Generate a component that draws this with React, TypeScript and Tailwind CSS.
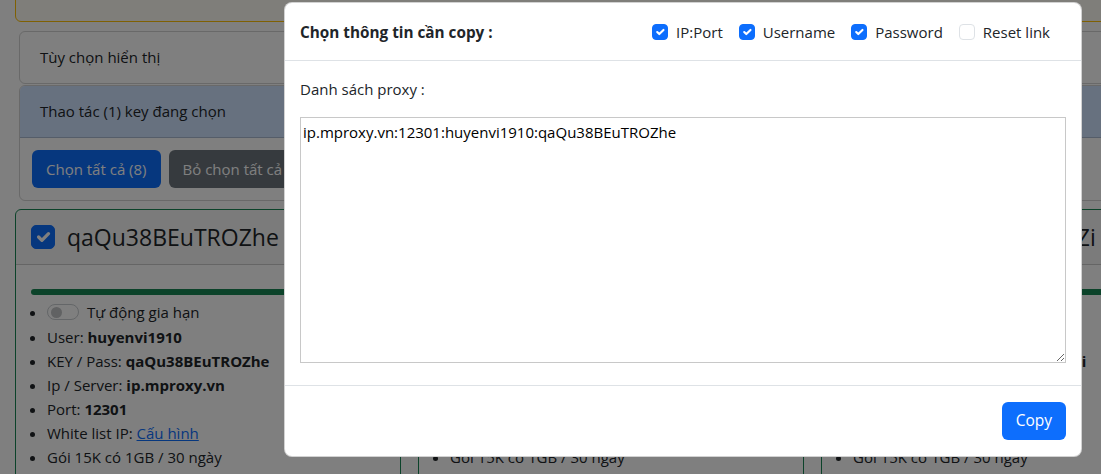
import React from "react";

function Check({ checked, size = 16 }: { checked: boolean; size?: number }) {
  const cls =
    size === 16
      ? "w-[16px] h-[16px] rounded-[4px]"
      : "w-[24px] h-[24px] rounded-[5px]";
  return (
    <span
      className={
        cls +
        " shrink-0 inline-flex items-center justify-center border " +
        (checked ? "bg-[#0d6efd] border-[#0d6efd]" : "bg-white border-[#dee2e6]")
      }
    >
      {checked && (
        <svg viewBox="0 0 20 20" className="w-full h-full">
          <path
            fill="none"
            stroke="#fff"
            strokeLinecap="round"
            strokeLinejoin="round"
            strokeWidth="3"
            d="m6 10 3 3 6-6"
          />
        </svg>
      )}
    </span>
  );
}

function KeyCard({ keyName, checked }: { keyName: string; checked: boolean }) {
  return (
    <div className="border border-[#198754] rounded-[6px] bg-white overflow-hidden">
      <div className="h-[55px] flex items-center gap-[12px] px-[15px] border-b border-black/[.175] bg-black/[.03]">
        <Check checked={checked} size={24} />
        <span className="text-[23px] leading-[30px] font-medium text-[#212529] whitespace-nowrap">
          {keyName}
        </span>
      </div>
      <div className="px-[15px] pt-[24px] pb-[16px]">
        <div className="h-[6px] rounded-full bg-[#198754]" />
        <ul className="list-disc pl-[16px] mt-[4px] text-[15px] leading-[24px] text-[#212529]">
          <li className="h-[26px] pt-[1px]">
            <span className="inline-flex items-center gap-[8px] align-top h-[24px]">
              <span className="w-[32px] h-[16px] rounded-full border border-[#c8ccd0] bg-white flex items-center pl-[3px]">
                <span className="w-[11px] h-[11px] rounded-full bg-[#c2c4c6]" />
              </span>
              <span>Tự động gia hạn</span>
            </span>
          </li>
          <li>
            User: <b>huyenvi1910</b>
          </li>
          <li>
            KEY / Pass: <b>{keyName}</b>
          </li>
          <li>
            Ip / Server: <b>ip.mproxy.vn</b>
          </li>
          <li>
            Port: <b>12301</b>
          </li>
          <li>
            White list IP: <span className="text-[#0d6efd] underline">Cấu hình</span>
          </li>
          <li>Gói 15K có 1GB / 30 ngày</li>
          <li>Hết hạn: 30 ngày</li>
        </ul>
      </div>
    </div>
  );
}

export default function App() {
  return (
    <div className="relative w-[1101px] h-[474px] overflow-hidden bg-white font-['Open_Sans',sans-serif] text-[#212529]">
      {/* background page */}
      <div className="absolute inset-0">
        <div className="w-[1220px] pl-[15px]">
          <div className="-mt-[40px] h-[62px] w-[1190px] border border-[#ffc107] rounded-[6px] bg-[#fffdf5]" />
          <div className="pl-[4px] mt-[9px] w-[1194px] flex flex-col gap-[1px]">
            <div className="h-[53px] border border-black/[.175] rounded-[6px] flex items-center px-[20px] text-[15px]">
              Tùy chọn hiển thị
            </div>
            <div className="border border-black/[.175] rounded-[6px] overflow-hidden">
              <div className="h-[52px] flex items-center px-[20px] bg-[#cfe2ff] border-b border-black/[.175] text-[15px]">
                Thao tác (1) key đang chọn
              </div>
              <div className="p-[12px] flex gap-[8px]">
                <button className="h-[38px] px-[14px] rounded-[6px] bg-[#0d6efd] text-white text-[15px]">
                  Chọn tất cả (8)
                </button>
                <button className="h-[38px] px-[14px] rounded-[6px] bg-[#6c757d] text-white text-[15px]">
                  Bỏ chọn tất cả
                </button>
                <button className="h-[38px] px-[14px] rounded-[6px] bg-[#198754] text-white text-[15px]">
                  Gia hạn
                </button>
              </div>
            </div>
          </div>
          <div className="mt-[8px] w-[1192px] grid grid-cols-3 gap-[17px]">
            <KeyCard keyName="qaQu38BEuTROZhe" checked={true} />
            <KeyCard keyName="hT5nLqWx2RkVpMo" checked={false} />
            <KeyCard keyName="mN4pWq7RtYxbKnZi" checked={false} />
          </div>
        </div>
      </div>

      {/* backdrop */}
      <div className="absolute inset-0 bg-black/50" />

      {/* modal */}
      <div className="absolute left-[284px] top-[2px] w-[798px] bg-white border border-black/[.175] rounded-[8px] flex flex-col">
        <div className="h-[58px] flex items-center justify-between pl-[15px] pr-[31px] border-b border-[#dee2e6]">
          <span className="text-[15.3px] font-bold leading-[24px]">Chọn thông tin cần copy :</span>
          <div className="flex items-center gap-[16px] text-[15px] leading-[24px]">
            <label className="flex items-center gap-[8px]">
              <Check checked={true} />
              <span>IP:Port</span>
            </label>
            <label className="flex items-center gap-[8px]">
              <Check checked={true} />
              <span>Username</span>
            </label>
            <label className="flex items-center gap-[8px]">
              <Check checked={true} />
              <span>Password</span>
            </label>
            <label className="flex items-center gap-[8px]">
              <Check checked={false} />
              <span>Reset link</span>
            </label>
          </div>
        </div>
        <div className="px-[15px] pt-[16px] pb-[22px] border-b border-[#dee2e6]">
          <div className="text-[15px] leading-[24px] mb-[16px]">Danh sách proxy :</div>
          <textarea
            readOnly
            rows={10}
            defaultValue="ip.mproxy.vn:12301:huyenvi1910:qaQu38BEuTROZhe"
            className="block w-full h-[246px] p-[2px] border border-[#c8c8c8] text-[15px] leading-[24px] text-black outline-none font-['Open_Sans',sans-serif]"
          />
        </div>
        <div className="h-[70px] flex items-center justify-end px-[15px]">
          <button className="h-[38px] px-[14px] rounded-[6px] bg-[#0d6efd] text-white text-[15.5px]">
            Copy
          </button>
        </div>
      </div>
    </div>
  );
}
